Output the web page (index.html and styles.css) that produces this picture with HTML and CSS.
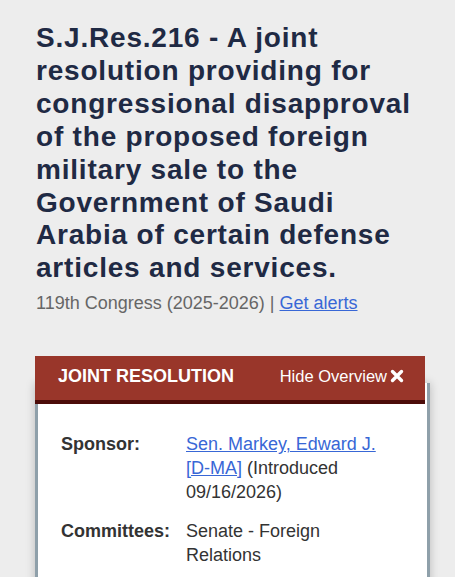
FILE: index.html
```html
<!DOCTYPE html>
<html lang="en">

<head>
    <meta charset="UTF-8">
    <meta name="viewport" content="width=device-width, initial-scale=1.0">
    <title>S.J.Res.216 - 119th Congress</title>
    <link rel="stylesheet" href="styles.css">
</head>

<body>
    <div class="main">
        <h1 class="legis-title">S.J.Res.216 - A joint resolution providing for congressional disapproval of the proposed foreign military sale to the Government of Saudi Arabia of certain defense articles and services.</h1>
        <p class="congress">119th Congress (2025-2026) | <a href="#">Get alerts</a></p>

        <div class="overview">
            <div class="overview-head">
                <span class="bill-type">Joint Resolution</span>
                <a class="toggle" href="#">Hide Overview
                    <svg width="14" height="14" viewBox="0 0 14 14">
                        <path d="M2.5 2.5 L11.5 11.5 M11.5 2.5 L2.5 11.5" stroke="#fff" stroke-width="3.4" stroke-linecap="round" fill="none"/>
                    </svg>
                </a>
            </div>
            <div class="overview-body">
                <table class="facts">
                    <tr>
                        <th>Sponsor:</th>
                        <td><a href="#">Sen. Markey, Edward J. [D-MA]</a> (Introduced 09/16/2026)</td>
                    </tr>
                    <tr>
                        <th>Committees:</th>
                        <td>Senate - Foreign Relations</td>
                    </tr>
                </table>
            </div>
        </div>
    </div>
</body>

</html>
```

FILE: styles.css
```css
* {
    box-sizing: border-box;
    margin: 0;
    padding: 0;
}

body {
    background-color: #ededed;
    font-family: "Liberation Sans", Arial, sans-serif;
}

.main {
    width: 395px;
    margin-left: 35px;
    padding-top: 22px;
}

.legis-title {
    font-size: 28px;
    line-height: 32.9px;
    font-weight: bold;
    letter-spacing: 0.8px;
    color: #1f2a44;
    padding-left: 1px;
}

.congress {
    margin-top: 6px;
    padding-left: 1px;
    font-size: 18px;
    line-height: 24px;
    color: #666;
}

.congress a {
    color: #3867d6;
}

.overview {
    margin-top: 41px;
}

.overview-head {
    position: relative;
    z-index: 1;
    width: 390px;
    height: 48px;
    display: flex;
    align-items: center;
    justify-content: space-between;
    padding: 0 21px 4px 23px;
    background-color: #99362a;
    border-bottom: 4px solid #4c0c09;
    color: #fff;
}

.bill-type {
    font-size: 18px;
    font-weight: bold;
    text-transform: uppercase;
}

.toggle {
    display: flex;
    align-items: center;
    gap: 3px;
    font-size: 16.5px;
    color: #fff;
    text-decoration: none;
}

.overview-body {
    margin-top: -21px;
    padding: 49px 23px 20px;
    background-color: #fff;
    border: 3px solid #8fa0aa;
    border-top: none;
    box-shadow: 0 0 9px rgba(0, 0, 0, 0.22);
    height: 220px;
}

.facts {
    border-collapse: collapse;
    font-size: 18px;
    line-height: 24px;
    color: #333;
}

.facts th {
    width: 125px;
    text-align: left;
    vertical-align: top;
    font-weight: bold;
    padding-bottom: 15px;
}

.facts td {
    width: 205px;
    vertical-align: top;
    padding-bottom: 15px;
}

.facts a {
    color: #3867d6;
}
```
